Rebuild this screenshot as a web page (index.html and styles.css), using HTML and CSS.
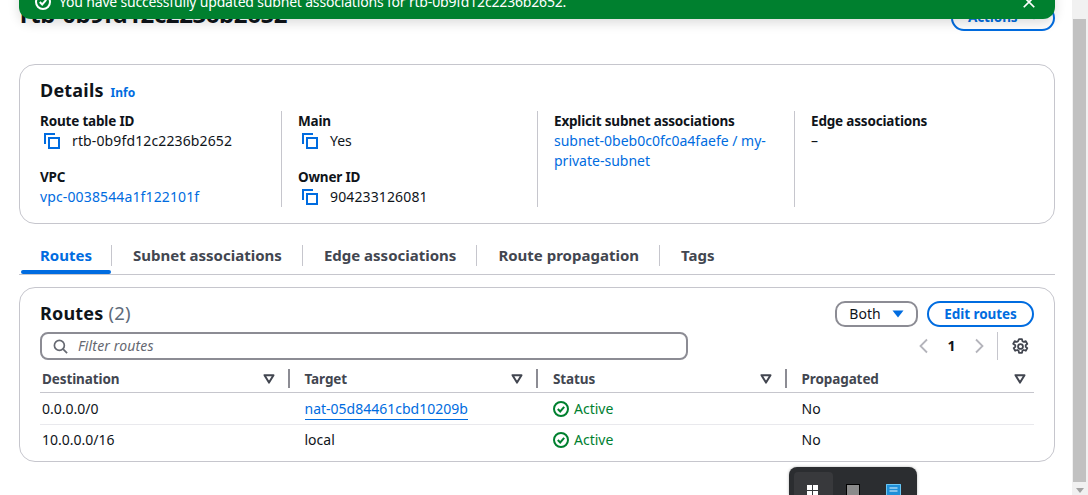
FILE: index.html
```html
<!DOCTYPE html>
<html lang="en">
<head>
<meta charset="utf-8">
<title>Route table</title>
<link rel="stylesheet" href="styles.css">
</head>
<body>
<svg class="defs" width="0" height="0" aria-hidden="true">
  <symbol id="copy" viewBox="0 0 16 16"><path d="M1 11V1h10M5 5h10v10H5z" fill="none" stroke="currentColor" stroke-width="2"/></symbol>
  <symbol id="ok" viewBox="0 0 16 16"><circle cx="8" cy="8" r="7" fill="none" stroke="currentColor" stroke-width="2"/><path d="M4.8 8l2.4 2.500 4-4.600" fill="none" stroke="currentColor" stroke-width="2"/></symbol>
  <symbol id="filt" viewBox="0 0 12 10"><path d="M1.500 1.200h9L6 8.600z" fill="none" stroke="currentColor" stroke-width="2" stroke-linejoin="round"/></symbol>
</svg>
<div class="page">
  <main class="main">
    <header class="head">
      <h1 class="title">rtb-0b9fd12c2236b2652</h1>
      <button class="btn actions">Actions <svg class="actions-caret" viewBox="0 0 8 6"><path d="M0.500 0.500h7L4 5.500z"/></svg></button>
    </header>

    <section class="card details">
      <h2 class="card-title">Details <a class="info">Info</a></h2>
      <div class="grid">
        <div class="col">
          <div class="item"><div class="label">Route table ID</div><div class="value copy id"><svg class="ic-copy"><use href="#copy"/></svg>rtb-0b9fd12c2236b2652</div></div>
          <div class="item"><div class="label">VPC</div><div class="value id"><a class="link">vpc-0038544a1f122101f</a></div></div>
        </div>
        <div class="col">
          <div class="item"><div class="label">Main</div><div class="value copy"><svg class="ic-copy"><use href="#copy"/></svg>Yes</div></div>
          <div class="item"><div class="label">Owner ID</div><div class="value copy id"><svg class="ic-copy"><use href="#copy"/></svg>904233126081</div></div>
        </div>
        <div class="col">
          <div class="item"><div class="label">Explicit subnet associations</div><div class="value"><a class="link">subnet-0beb0c0fc0a4faefe / my-private-subnet</a></div></div>
        </div>
        <div class="col">
          <div class="item"><div class="label">Edge associations</div><div class="value">–</div></div>
        </div>
      </div>
    </section>

    <nav class="tabs">
      <a class="tab active">Routes</a>
      <a class="tab">Subnet associations</a>
      <a class="tab">Edge associations</a>
      <a class="tab">Route propagation</a>
      <a class="tab last">Tags</a>
    </nav>

    <section class="card routes">
      <div class="routes-top">
        <h2 class="card-title">Routes <span class="count">(2)</span></h2>
        <div class="tools">
          <button class="btn both">Both <svg class="both-caret" viewBox="0 0 12 8"><path d="M0.500 0.500h11L6 7.500z"/></svg></button>
          <button class="btn edit">Edit routes</button>
        </div>
      </div>
      <div class="filter-row">
        <div class="search">
          <svg class="ic-search" viewBox="0 0 16 16"><circle cx="6.800" cy="6.800" r="5.300" fill="none" stroke="currentColor" stroke-width="1.800"/><path d="M10.800 10.800l4.200 4.200" stroke="currentColor" stroke-width="1.800"/></svg>
          <span class="placeholder">Filter routes</span>
        </div>
        <div class="pager">
          <svg class="chev" viewBox="0 0 10 16"><path d="M8.500 1.500L2 8l6.500 6.500" fill="none" stroke="currentColor" stroke-width="1.800"/></svg>
          <span class="pnum">1</span>
          <svg class="chev" viewBox="0 0 10 16"><path d="M1.500 1.500L8 8l-6.500 6.500" fill="none" stroke="currentColor" stroke-width="1.800"/></svg>
          <span class="gear-wrap">
            <svg class="gear" viewBox="0 0 16 16"><path d="M6.600 1h2.800l.4 2 1.300.7 1.900-.7 1.400 2.500-1.500 1.300v1.400l1.500 1.300-1.400 2.500-1.900-.7-1.300.7-.4 2H6.600l-.4-2-1.300-.7-1.900.7-1.400-2.500 1.500-1.300V6.800L1.100 5.500l1.400-2.500 1.900.7 1.300-.7z" fill="none" stroke="currentColor" stroke-width="1.700" stroke-linejoin="round"/><circle cx="8" cy="8" r="2.300" fill="none" stroke="currentColor" stroke-width="1.700"/></svg>
          </span>
        </div>
      </div>
      <table class="table">
        <thead>
          <tr>
            <th><span class="th"><span>Destination</span><svg class="ic-filt"><use href="#filt"/></svg></span></th>
            <th><span class="th"><span>Target</span><svg class="ic-filt"><use href="#filt"/></svg></span></th>
            <th><span class="th"><span>Status</span><svg class="ic-filt"><use href="#filt"/></svg></span></th>
            <th class="lastcol"><span class="th"><span>Propagated</span><svg class="ic-filt"><use href="#filt"/></svg></span></th>
          </tr>
        </thead>
        <tbody>
          <tr>
            <td>0.0.0.0/0</td>
            <td><a class="link under">nat-05d84461cbd10209b</a></td>
            <td><span class="status"><svg class="ic-ok"><use href="#ok"/></svg>Active</span></td>
            <td>No</td>
          </tr>
          <tr>
            <td>10.0.0.0/16</td>
            <td>local</td>
            <td><span class="status"><svg class="ic-ok"><use href="#ok"/></svg>Active</span></td>
            <td>No</td>
          </tr>
        </tbody>
      </table>
    </section>
  </main>
  <div class="scrollbar"><div class="thumb"></div><div class="arrow"></div></div>
</div>

<div class="banner">
  <svg class="ban-ok"><use href="#ok"/></svg>
  <span class="ban-text">You have successfully updated subnet associations for rtb-0b9fd12c2236b2652.</span>
  <svg class="ban-x" viewBox="0 0 16 16"><path d="M2 2l12 12M14 2L2 14" stroke="currentColor" stroke-width="2"/></svg>
</div>

<div class="taskbar">
  <div class="task-tile"><span class="win"><i></i><i></i><i></i><i></i></span></div>
  <div class="task-app"><span class="app-gray"></span></div>
  <div class="task-app">
    <svg class="app-blue" viewBox="0 0 15 11"><rect width="15" height="11" fill="#1f8fd8"/><path d="M0.500 11V0.500h14V11" fill="none" stroke="#6cc6f2"/><path d="M3.500 4h8M3.500 7h8" stroke="#e6f5fd"/></svg>
  </div>
</div>
</body>
</html>
```
FILE: styles.css
```css
* { box-sizing: border-box; }
html, body { margin: 0; height: 495px; overflow: hidden; background: #fff; }
body { font: 14px/20px "Noto Sans", "Open Sans", sans-serif; color: #0f141a; position: relative; }
.defs { position: absolute; }
.page { display: flex; height: 495px; }
.main { flex: 1; min-width: 0; padding: 0 17px 0 19px; }
.scrollbar { width: 16px; background: #f1f1f1; padding: 19px 2px 0 1px; position: relative; }
.thumb { height: 463px; background: #c1c1c1; }
.arrow { width: 0; height: 0; margin: 6px auto 0; border: 4px solid transparent; border-top: 5px solid #a3a3a3; border-bottom: 0; }

.head { display: flex; justify-content: space-between; align-items: flex-end; height: 32px; margin-top: -1px; }
.title { margin: 0 0 2px 1px; font-size: 24px; line-height: 30px; font-weight: 700; letter-spacing: -.42px; }
.btn { font: inherit; background: #fff; border-radius: 20px; }
.actions { width: 104px; height: 26px; border: 2px solid #006ce0; color: #006ce0; font-weight: 700; font-size: 13.5px; letter-spacing: -.1px; padding: 0 0 2px 15px; display: flex; align-items: center; gap: 12px; }
.actions-caret { width: 8px; height: 6px; fill: #006ce0; }

.card { border: 1px solid #c6c6cd; border-radius: 16px; background: #fff; }
.details { height: 160px; margin-top: 33px; padding: 0 20px; }
.card-title { margin: 0; font-size: 18px; line-height: 24px; font-weight: 700; letter-spacing: .2px; }
.details .card-title { padding-top: 13px; height: 46px; }
.info { font-size: 12px; color: #006ce0; margin-left: 2px; letter-spacing: 0; }
.grid { display: grid; grid-template-columns: 242px 256px 257px 1fr; height: 96px; }
.col { border-right: 1px solid #c6c6cd; padding-left: 16px; padding-right: 24px; display: flex; flex-direction: column; gap: 16px; }
.col:first-child { padding-left: 0; }
.col:last-child { border-right: 0; }
.label { font-weight: 700; font-size: 13.5px; letter-spacing: -.18px; }
.value { min-height: 20px; }
.id { letter-spacing: .13px; }
.copy { display: flex; align-items: center; }
.ic-copy { width: 16px; height: 16px; color: #006ce0; margin: 0 12px 0 4px; flex: none; }
.link { color: #006ce0; }
.under { border-bottom: 1px solid #006ce0; padding-bottom: 1px; }

.tabs { display: flex; height: 30px; margin-top: 21px; border-bottom: 1px solid #c6c6cd; align-items: flex-start; }
.tab { font-size: 15px; font-weight: 700; color: #424650; line-height: 21px; padding: 0 20px 0 21px; border-right: 1px solid #c6c6cd; position: relative; }
.tab.last { border-right: 0; }
.tab.active { color: #006ce0; padding-right: 19px; }
.tab.active::after { content: ""; position: absolute; left: 2px; right: 0; top: 25px; height: 4px; background: #006ce0; border-radius: 2px; }

.routes { height: 175px; margin-top: 12px; padding: 0 20px; }
.routes-top { display: flex; justify-content: space-between; align-items: center; height: 26px; margin-top: 13px; }
.routes .card-title { margin-top: -2px; }
.count { font-weight: 400; color: #5f6b7a; font-size: 18.5px; }
.tools { display: flex; gap: 9px; }
.both { width: 83px; height: 26px; border: 2px solid #8c8c94; border-radius: 10px; color: #0f141a; padding: 0; display: flex; align-items: center; justify-content: center; gap: 11px; }
.both-caret { width: 12px; height: 8px; fill: #006ce0; }
.edit { width: 107px; height: 26px; border: 2px solid #006ce0; color: #006ce0; font-weight: 700; font-size: 13.5px; letter-spacing: -.05px; padding: 0; }

.filter-row { display: flex; justify-content: space-between; margin-top: 5px; height: 28px; }
.search { width: 648px; height: 28px; border: 2px solid #8c8c94; border-radius: 8px; display: flex; align-items: center; padding-left: 11px; }
.ic-search { width: 15px; height: 15px; color: #656871; flex: none; margin-right: 10px; }
.placeholder { font-style: italic; font-size: 14px; letter-spacing: .15px; color: #656871; }
.pager { display: flex; align-items: center; color: #b4b4bb; }
.chev { width: 11px; height: 16px; }
.pnum { width: 45px; text-align: center; font-weight: 700; color: #0f141a; }
.gear-wrap { margin-left: 12px; border-left: 1px solid #c6c6cd; height: 28px; width: 37px; display: flex; align-items: center; justify-content: flex-end; color: #424650; }
.gear { width: 17px; height: 17px; margin-right: 5px; }

.table { width: 994px; border-collapse: collapse; table-layout: fixed; margin-top: 5px; }
.table th { height: 27px; padding: 4px 0 0 16px; text-align: left; font-size: 13.5px; font-weight: 700; letter-spacing: -.1px; color: #424650; border-bottom: 1px solid #c6c6cd; width: 248.5px; vertical-align: top; }
.table th:first-child { padding-left: 2px; }
.th { display: flex; justify-content: space-between; align-items: center; padding-right: 14px; position: relative; height: 19px; }
.th::after { content: ""; position: absolute; right: -1px; top: 0; width: 2px; height: 19px; background: #8c8c94; }
.lastcol .th::after { display: none; }
.lastcol .th { padding-right: 8px; }
.ic-filt { width: 12px; height: 10px; color: #424650; flex: none; }
.table td { padding: 0 0 0 16px; height: 32px; border-bottom: 1px solid #e9e9ed; }
.table td:first-child { padding-left: 2px; }
.table tbody tr:first-child td { padding-top: 1px; }
.table tr:last-child td { border-bottom: 0; }
.status { color: #00802f; display: flex; align-items: center; }
.ic-ok { width: 16px; height: 16px; color: #00802f; margin-right: 5px; }

.banner { position: absolute; left: 19px; top: -13px; width: 1036px; height: 32px; background: #00802f; color: #fff; border-radius: 0 0 12px 12px; box-shadow: 0 4px 12px rgba(0,0,0,.14); display: flex; align-items: center; padding: 0 19px 2px 16px; }
.ban-ok { width: 16px; height: 16px; color: #fff; margin-right: 8px; flex: none; }
.ban-text { flex: 1; letter-spacing: -.18px; }
.ban-x { width: 14px; height: 14px; color: #fff; }

.taskbar { position: absolute; left: 789px; top: 467px; width: 128px; height: 28px; background: #2b2d30; border-radius: 8px 8px 0 0; padding: 5px 0 0 5px; display: flex; box-shadow: 0 0 3px rgba(0,0,0,.3); }
.task-tile { width: 39px; height: 23px; background: #38393c; border-radius: 4px 4px 0 0; display: flex; justify-content: center; padding: 13px 2px 0 0; }
.win { display: grid; grid-template-columns: 5px 5px; gap: 1px; align-content: start; }
.win i { width: 5px; height: 5px; background: #fff; display: block; }
.task-app { width: 40px; display: flex; justify-content: center; padding-top: 12px; }
.app-gray { width: 14px; height: 11px; background: #8b8b8b; border: 1px solid #000; border-bottom: 0; display: block; }
.app-blue { width: 15px; height: 11px; display: block; }
```
